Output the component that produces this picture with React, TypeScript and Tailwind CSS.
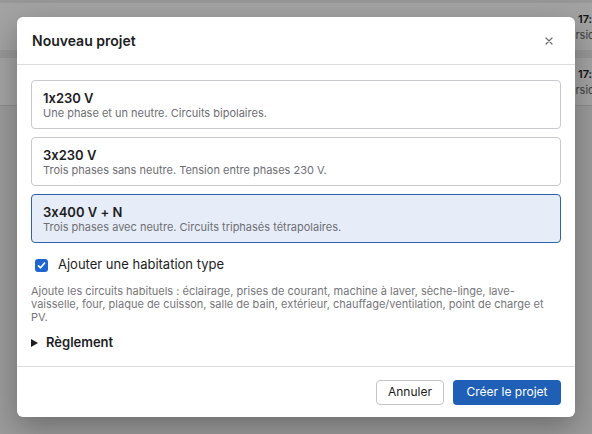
import React from "react";

const options = [
  { title: "1x230 V", desc: "Une phase et un neutre. Circuits bipolaires." },
  { title: "3x230 V", desc: "Trois phases sans neutre. Tension entre phases 230 V." },
  { title: "3x400 V + N", desc: "Trois phases avec neutre. Circuits triphasés tétrapolaires.", selected: true },
];

function BackgroundRow() {
  return (
    <div className="h-[47px] bg-white flex justify-end">
      <div className="w-[30px] pt-[9px] text-[11px] leading-[14px] whitespace-nowrap">
        <div className="pl-[16px] font-semibold text-[#222]">17:42</div>
        <div className="mt-[2px] text-[#666]">Version 2</div>
      </div>
    </div>
  );
}

export default function App() {
  return (
    <div className="relative w-[592px] h-[434px] overflow-hidden bg-[#f3f3f5] font-['Inter','Noto_Sans',sans-serif] [font-feature-settings:'calt'_0]">
      <div className="h-[3px] bg-[#ececee]" />
      <div className="flex flex-col gap-[8px] bg-[#ececee] border-b border-[#dcdce0]">
        <BackgroundRow />
        <BackgroundRow />
      </div>

      <div className="absolute inset-0 bg-black/[0.36] flex items-center justify-center">
        <div className="w-[558px] h-[400px] bg-white rounded-[6px] shadow-[0_10px_30px_rgba(0,0,0,0.3)] flex flex-col">
          <div className="h-[48px] shrink-0 px-[15px] flex items-center justify-between border-b border-[#dcdcdf]">
            <h2 className="text-[14px] font-semibold text-[#1d1d1f]">Nouveau projet</h2>
            <button className="w-[16px] h-[16px] mr-[3px] flex items-center justify-center">
              <svg width="8" height="8" viewBox="0 0 8 8">
                <path d="M1 1L7 7M7 1L1 7" stroke="#6b6b70" strokeWidth="1.2" strokeLinecap="round" />
              </svg>
            </button>
          </div>

          <div className="flex-1 px-[14px] pt-[15px]">
            <div className="flex flex-col gap-[8px]">
              {options.map((o) => (
                <div
                  key={o.title}
                  className={
                    o.selected
                      ? "border border-[#2d63ae] bg-[#e6edf8] rounded-[4px] pl-[11px] pt-[9px] pb-[8px]"
                      : "border border-[#c9c9cd] bg-white rounded-[4px] pl-[11px] pt-[9px] pb-[8px]"
                  }
                >
                  <div className="text-[13px] leading-[16px] font-semibold text-[#1d1d1f]">{o.title}</div>
                  <div className="text-[11px] leading-[14px] text-[#6e6e73]">{o.desc}</div>
                </div>
              ))}
            </div>

            <label className="mt-[13px] pl-[4px] flex items-center gap-[10px] h-[18px]">
              <span className="w-[13px] h-[13px] rounded-[3px] bg-[#1f66d1] flex items-center justify-center">
                <svg width="9" height="9" viewBox="0 0 9 9">
                  <path d="M1.5 4.8L3.6 6.8L7.6 2" stroke="white" strokeWidth="1.6" fill="none" strokeLinecap="round" strokeLinejoin="round" />
                </svg>
              </span>
              <span className="text-[13px] text-[#1d1d1f]">Ajouter une habitation type</span>
            </label>

            <p className="mt-[11px] text-[11px] leading-[13px] text-[#76767b]">
              Ajoute les circuits habituels : éclairage, prises de courant, machine à laver, sèche-linge, lave-vaisselle, four, plaque de cuisson, salle de bain, extérieur, chauffage/ventilation, point de charge et PV.
            </p>

            <div className="mt-[10px] flex items-center gap-[8px] h-[18px]">
              <svg width="7" height="8" viewBox="0 0 7 8">
                <path d="M0 0L7 4L0 8Z" fill="#1d1d1f" />
              </svg>
              <span className="text-[13px] font-semibold text-[#1d1d1f]">Règlement</span>
            </div>
          </div>

          <div className="h-[51px] shrink-0 border-t border-[#dcdcdf] px-[14px] flex items-center justify-end gap-[9px]">
            <button className="h-[25px] w-[68px] rounded-[4px] border border-[#c4c4c8] bg-white text-[12px] text-[#1d1d1f]">
              Annuler
            </button>
            <button className="h-[25px] w-[108px] rounded-[4px] bg-[#1f5fb5] text-[12px] text-white">
              Créer le projet
            </button>
          </div>
        </div>
      </div>
    </div>
  );
}
